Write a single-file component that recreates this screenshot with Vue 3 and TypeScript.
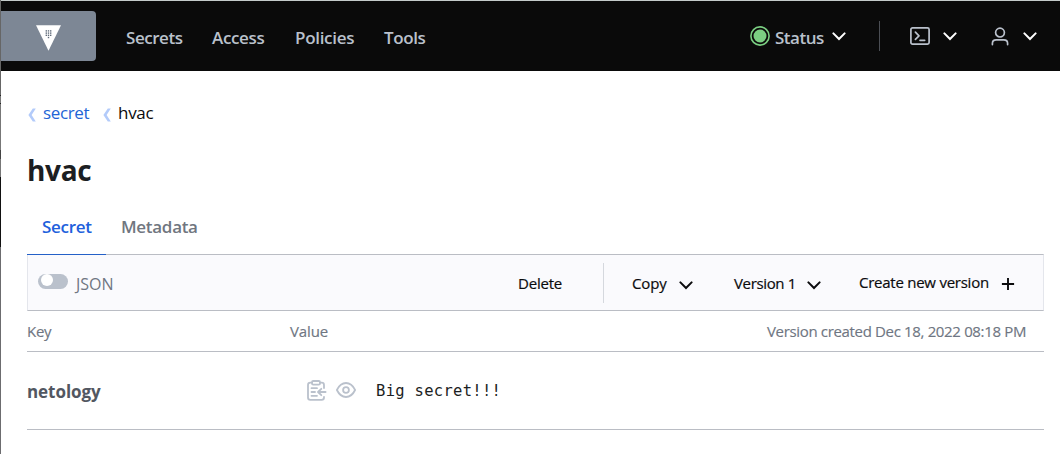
<script setup lang="ts">
const navItems: { label: string; cls: string }[] = [
  { label: 'Secrets', cls: 'n-secrets' },
  { label: 'Access', cls: 'n-access' },
  { label: 'Policies', cls: 'n-policies' },
  { label: 'Tools', cls: 'n-tools' },
]
const chevron = 'M1.4 1.4 L7 7 L12.6 1.4'
const dots: number[][] = []
for (let r = 0; r < 3; r++) for (let c = 0; c < 3; c++) dots.push([9.6 + c * 2.2, 5.6 + r * 2.2])
dots.push([11.8, 12.2])
</script>

<template>
  <div class="page">
    <div class="edge"></div>
    <header class="header">
      <div class="brand">
        <svg width="26" height="26" viewBox="0 0 26 26">
          <path d="M0 0.3 H25 L12.5 25.8 Z" fill="#fff" />
          <rect v-for="(d, i) in dots" :key="i" :x="d[0]" :y="d[1] - 0.4" width="1.4" height="1.4" fill="#606b7b" />
        </svg>
      </div>
      <nav class="nav">
        <a v-for="n in navItems" :key="n.label" :class="n.cls">{{ n.label }}</a>
      </nav>
      <div class="tools">
        <svg class="dot" width="20" height="20" viewBox="0 0 20 20">
          <circle cx="10" cy="10" r="9.1" fill="none" stroke="#7bcf82" stroke-width="1.6" />
          <circle cx="10" cy="10" r="6.5" fill="#7bcf82" />
        </svg>
        <span class="status">Status</span>
        <svg class="chev" width="14" height="9" viewBox="0 0 14 9"><path :d="chevron" /></svg>
        <i class="divider"></i>
        <svg class="line console" width="20" height="18" viewBox="0 0 20 18">
          <rect x="0.9" y="0.9" width="18.2" height="16.2" rx="1.6" />
          <path d="M5.4 5.2 L9 8.8 L5.4 12.4 M10 13.3 H14.7" />
        </svg>
        <svg class="chev c2" width="14" height="9" viewBox="0 0 14 9"><path :d="chevron" /></svg>
        <svg class="line user" width="18" height="19" viewBox="0 0 18 19">
          <circle cx="9" cy="5.6" r="4.4" />
          <path d="M1.4 17.6 V16.4 Q1.4 12.9 5.2 12.9 H12.8 Q16.6 12.9 16.6 16.4 V17.6" />
        </svg>
        <svg class="chev c3" width="14" height="9" viewBox="0 0 14 9"><path :d="chevron" /></svg>
      </div>
    </header>

    <main class="main">
      <div class="crumbs">
        <svg width="9" height="14" viewBox="0 0 9 14"><path d="M5.8 .5 H8.8 L4.6 7 L8.8 13.5 H5.8 L1.4 7 Z" /></svg>
        <a class="crumb-link">secret</a>
        <svg width="9" height="14" viewBox="0 0 9 14"><path d="M5.8 .5 H8.8 L4.6 7 L8.8 13.5 H5.8 L1.4 7 Z" /></svg>
        <span class="crumb-here">hvac</span>
      </div>
      <h1>hvac</h1>
      <div class="tabs">
        <a class="tab active">Secret</a>
        <a class="tab meta">Metadata</a>
      </div>
      <div class="toolbar">
        <span class="toggle"><i></i></span>
        <span class="json">JSON</span>
        <div class="actions">
          <span class="delete">Delete</span>
          <i class="sep"></i>
          <span class="copy">Copy</span>
          <svg class="chev dark" width="14" height="9" viewBox="0 0 14 9"><path :d="chevron" /></svg>
          <span class="version">Version 1</span>
          <svg class="chev dark" width="14" height="9" viewBox="0 0 14 9"><path :d="chevron" /></svg>
          <span class="create">Create new version</span>
          <svg class="plus" width="14" height="14" viewBox="0 0 14 14"><path d="M7 .9 V13.1 M.9 7 H13.1" /></svg>
        </div>
      </div>
      <div class="row head">
        <span class="key">Key</span>
        <span class="value">Value</span>
        <span class="created">Version created Dec 18, 2022 08:18 PM</span>
      </div>
      <div class="row item">
        <span class="name">netology</span>
        <svg class="icon clip" width="20" height="21" viewBox="0 0 20 21">
          <path d="M5 2.7 H3.3 Q1 2.7 1 5 V17.5 Q1 19.8 3.3 19.8 H14.7 Q17 19.8 17 17.5 V16.8 M13 2.7 H14.7 Q17 2.7 17 5 V8" />
          <rect x="5" y="1" width="8" height="3.6" rx="1.2" />
          <path d="M4.5 8.2 H10 M4.5 12 H8 M4.5 15.8 H10 M18.6 12 H11.2 M14.3 8.8 L11 12 L14.3 15.2" />
        </svg>
        <svg class="icon eye" width="20" height="16" viewBox="0 0 20 16">
          <path d="M.9 8 Q4.3 1 10 1 T19.1 8 Q15.7 15 10 15 T.9 8 Z" />
          <circle cx="10" cy="8" r="2.9" />
        </svg>
        <span class="mono">Big secret!!!</span>
      </div>
    </main>
  </div>
</template>

<style>
body { margin: 0; background: #fff; }
</style>

<style scoped>
.page {
  position: relative;
  box-sizing: border-box;
  width: 1060px;
  height: 454px;
  overflow: hidden;
  background: #fff;
  color: #0b0b0d;
  font-family: "Open Sans", "Noto Sans", sans-serif;
  white-space: nowrap;
}
svg { display: block; flex: none; }
span, a, i { flex: none; }
.edge {
  position: absolute;
  left: 0;
  top: 0;
  width: 1px;
  height: 454px;
  background: linear-gradient(#666 0 95px, #222 95px 96px, #777 96px 103px, #222 103px 104px, #777 104px 150px, #444 150px 159px, #777 159px 177px, #111 177px 247px, #6c6c6f 247px);
}
.header {
  box-sizing: border-box;
  height: 71px;
  margin-left: 1px;
  border-top: 1px solid #c4cbca;
  background: #0a0a0a;
  display: flex;
  align-items: flex-start;
}
.brand {
  box-sizing: border-box;
  width: 95px;
  height: 50px;
  margin-top: 10px;
  padding: 14px 0 0 35px;
  border-radius: 0 4px 4px 0;
  background: #7d8795;
}
.nav {
  display: flex;
  margin: 24px 0 0 30px;
  width: 624px;
  color: #bac1cc;
  font-size: 17px;
  font-weight: 600;
  line-height: 25px;
}
.n-secrets { width: 86px; letter-spacing: -0.45px; }
.n-access { width: 83px; letter-spacing: -0.35px; }
.n-policies { width: 89px; letter-spacing: -0.3px; }
.n-tools { letter-spacing: -0.4px; }
.tools { display: flex; height: 70px; }
.dot { margin-top: 25px; }
.status {
  margin: 24px 0 0 5px;
  width: 57px;
  color: #bac1cc;
  font-size: 17px;
  font-weight: 600;
  line-height: 25px;
  letter-spacing: -0.5px;
}
.chev { margin-top: 31px; fill: none; stroke: #fff; stroke-width: 2; stroke-linecap: round; }
.divider { width: 1px; height: 30px; margin: 20px 30px 0 33px; background: #4b4e54; }
.line { fill: none; stroke: #bac1cc; stroke-width: 1.7; stroke-linecap: round; stroke-linejoin: round; }
.console { margin-top: 26px; }
.c2 { margin-left: 13px; }
.user { margin: 26px 0 0 34px; }
.c3 { margin-left: 14px; }
.main { width: 1017px; margin-left: 27px; }
.crumbs {
  display: flex;
  padding-top: 29px;
  height: 26px;
  font-size: 17px;
  line-height: 25px;
}
.crumbs svg { margin-top: 8px; fill: #b3cbfa; }
.crumb-link { width: 52px; margin: 0 7px; color: #2264d6; letter-spacing: -0.35px; }
.crumb-here { margin-left: 7px; letter-spacing: -0.3px; }
h1 {
  margin: 24px 0 0;
  font-size: 28px;
  line-height: 40px;
  font-weight: 700;
  letter-spacing: -0.3px;
  color: #1c1e22;
}
.tabs { display: flex; height: 65px; margin-bottom: -1px; }
.tab {
  box-sizing: border-box;
  height: 65px;
  padding: 24px 0 0 15px;
  font-size: 17px;
  line-height: 25px;
  font-weight: 600;
  color: #70767f;
  letter-spacing: -0.3px;
}
.active { width: 79px; color: #2160dc; border-bottom: 1px solid #2460c8; z-index: 1; }
.toolbar {
  box-sizing: border-box;
  height: 57px;
  display: flex;
  border: 1px solid #e4e6ec;
  border-top-color: #babdc4;
  border-bottom-color: #babdc4;
  background: #fafafd;
}
.toggle { box-sizing: border-box; width: 30px; height: 15px; margin: 19px 0 0 10px; border-radius: 8px; background: #bac1cc; }
.toggle i { display: block; width: 12px; height: 12px; margin-left: 3px; border-radius: 50%; background: #fff; }
.json { width: 442px; margin: 17px 0 0 8px; font-size: 16px; line-height: 25px; color: #6f7682; }
.actions { display: flex; font-size: 15px; line-height: 24px; -webkit-text-stroke: 0.2px #0b0b0d; }
.delete { width: 85px; margin-top: 16px; letter-spacing: -0.2px; }
.sep { width: 1px; height: 40px; margin-top: 8px; background: #d5d8de; }
.copy { width: 47px; margin: 16px 0 0 28px; letter-spacing: -0.1px; }
.version { width: 73px; margin: 16px 0 0 41px; letter-spacing: -0.35px; }
.create { width: 142px; margin: 15px 0 0 38px; letter-spacing: -0.25px; }
.dark { margin-top: 26px; stroke: #0b0b0d; }
.plus { margin-top: 22px; fill: none; stroke: #0b0b0d; stroke-width: 1.9; }
.row { box-sizing: border-box; display: flex; border-bottom: 1px solid #babdc4; }
.head { height: 41px; padding-top: 8px; font-size: 15px; line-height: 24px; color: #6f7682; -webkit-text-stroke: 0.15px #6f7682; }
.key { width: 263px; letter-spacing: -0.3px; }
.value { width: 477px; letter-spacing: -0.1px; }
.created { letter-spacing: -0.34px; }
.item { height: 78px; }
.name { width: 280px; margin-top: 27px; font-size: 17px; line-height: 25px; font-weight: 700; color: #525761; letter-spacing: -0.05px; }
.icon { fill: none; stroke: #bac1cc; stroke-width: 1.8; stroke-linecap: round; stroke-linejoin: round; }
.clip { margin-top: 28px; }
.eye { margin: 30px 0 0 9px; }
.mono { margin: 27px 0 0 20px; font-family: "DejaVu Sans Mono", monospace; font-size: 15.5px; line-height: 25px; letter-spacing: 0.3px; color: #1c1e22; }
</style>
